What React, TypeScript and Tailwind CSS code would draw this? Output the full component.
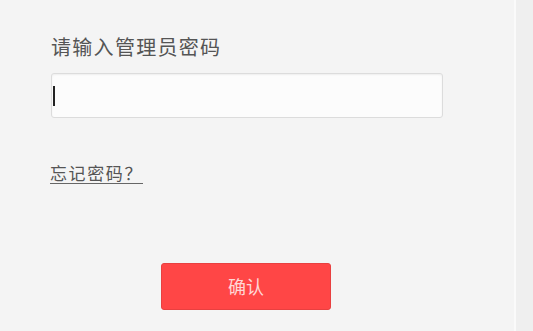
import React from "react";

export default function App() {
  const font = { fontFamily: '"Noto Sans CJK SC", "Liberation Sans", sans-serif' };
  return (
    <div className="w-[533px] h-[331px] flex bg-[#efefef] overflow-hidden" style={font}>
      <div className="w-[516px] h-full bg-[#f4f4f4] flex flex-col pl-[51px] border-r-2 border-[#fafafa]">
        <div className="mt-[33px] text-[20px] leading-[28px] tracking-[1.3px] text-[#555555]">请输入管理员密码</div>
        <div className="mt-[12px] w-[392px] h-[45px] bg-[#fcfcfc] border border-[#dcdcdc] rounded-[3px] shadow-[inset_0_1px_2px_rgba(0,0,0,0.06)] flex items-center">
          <span className="w-[2px] h-[20px] bg-[#222222] ml-[1px]" />
        </div>
        <div className="mt-[43px]">
          <span className="-ml-[1px] text-[17px] leading-[22px] tracking-[1.6px] text-[#555555] underline underline-offset-[3px] decoration-[#666666]">忘记密码？</span>
        </div>
        <div className="mt-[78px] ml-[110px] w-[170px] h-[47px] bg-[#ff4646] border border-[#e84040] rounded-[3px] flex items-center justify-center text-[18px] text-[#ffd6d6]">
          确认
        </div>
      </div>
    </div>
  );
}
